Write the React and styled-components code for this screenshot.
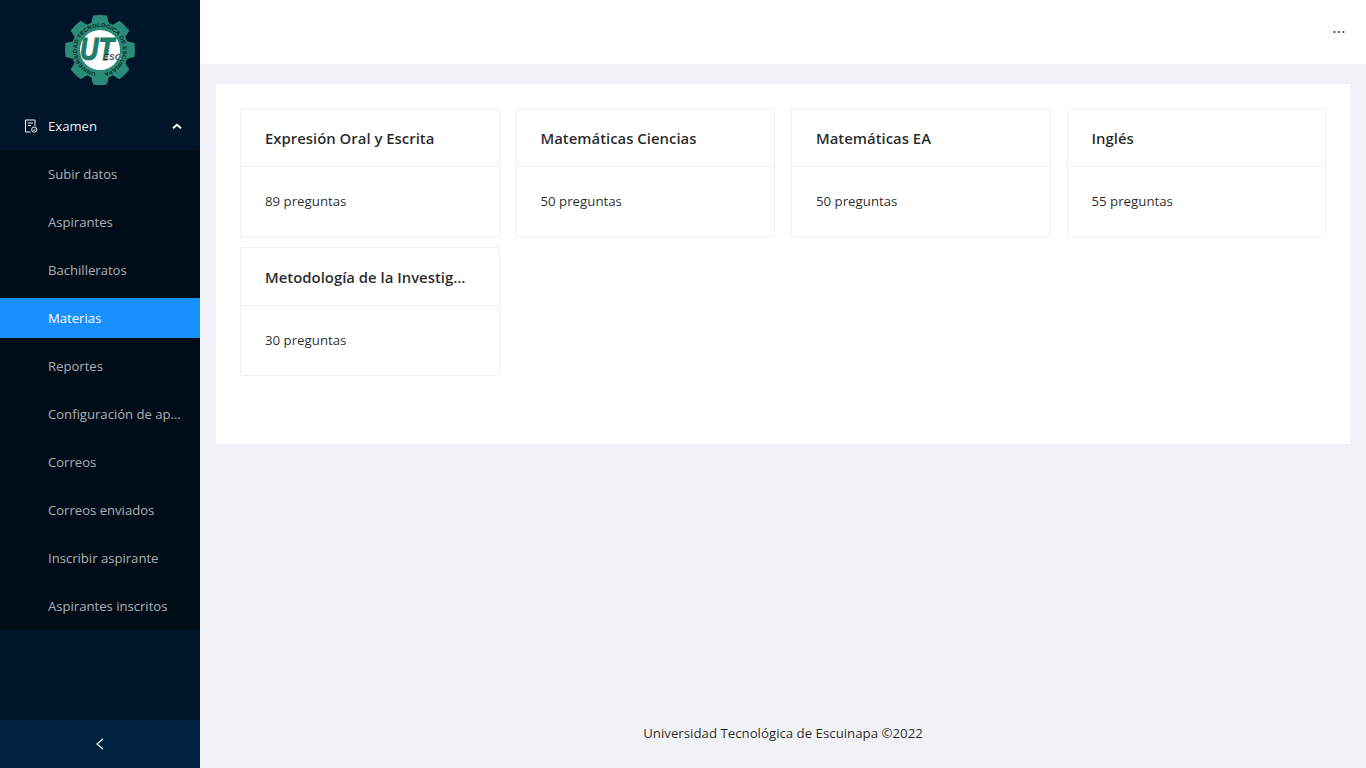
import React from "react";
import styled, { createGlobalStyle } from "styled-components";

const Global = createGlobalStyle`
  html, body { margin: 0; padding: 0; height: 100%; }
  body { font-family: "Open Sans", "Noto Sans", "Liberation Sans", sans-serif; font-size: 14px; color: rgba(0,0,0,.85); background: #f0f2f5; }
  * { box-sizing: border-box; }
`;
const Layout = styled.div`display: flex; width: 1366px; height: 768px; overflow: hidden;`;
const Sider = styled.aside`width: 200px; flex: none; background: #001529; display: flex; flex-direction: column;`;
const LogoBox = styled.div`height: 106px; display: flex; justify-content: center; padding-top: 14px;`;
const MenuTitle = styled.div`height: 40px; margin-bottom: 4px; padding: 0 18px 0 24px; display: flex; align-items: center; color: rgba(255,255,255,.95); font-size: 13.1px;`;
const TitleText = styled.span`flex: 1; margin-left: 10px;`;
const SubMenu = styled.div`background: #000c17; height: 480px; display: flex; flex-direction: column;`;
const SubItem = styled.div`
  height: 40px; flex: none; margin: 4px 0; padding-left: 48px; padding-right: 16px; line-height: 40px; font-size: 13.1px;
  color: ${p => (p.$active ? "#fff" : "rgba(255,255,255,.68)")};
  background: ${p => (p.$active ? "#1890ff" : "transparent")};
  white-space: nowrap; overflow: hidden; text-overflow: ellipsis;
`;
const Spacer = styled.div`flex: 1;`;
const Trigger = styled.div`height: 48px; background: #002140; color: #fff; display: flex; align-items: center; justify-content: center;`;
const Main = styled.div`flex: 1; display: flex; flex-direction: column; min-width: 0;`;
const Header = styled.header`height: 64px; background: #fff; display: flex; align-items: center; justify-content: flex-end; padding-right: 21px; flex: none;`;
const Content = styled.main`margin: 20px 16px 0; padding: 24px; height: 360px; background: #fff; flex: none;`;
const Grid = styled.div`display: grid; grid-template-columns: repeat(4, 1fr); column-gap: 16px; row-gap: 10px;`;
const Card = styled.div`border: 1px solid #f0f0f0; border-radius: 2px; background: #fff; height: 129px; min-width: 0;`;
const CardHead = styled.div`height: 58px; padding: 0 26px 0 24px; border-bottom: 1px solid #f0f0f0; display: flex; align-items: center; font-size: 14.9px; font-weight: 600; color: rgba(0,0,0,.85);`;
const CardTitle = styled.span`white-space: nowrap; overflow: hidden; text-overflow: ellipsis;`;
const CardBody = styled.div`padding: 23px 24px; line-height: 22px; font-size: 13.25px;`;
const Footer = styled.footer`flex: 1; display: flex; align-items: flex-end; justify-content: center; padding-bottom: 24px; line-height: 22px; font-size: 13.25px;`;

const Logo = () => {
  const teeth = Array.from({ length: 8 }, (_, i) => i * 45);
  return (
    <svg width="72" height="72" viewBox="0 0 72 72">
      {teeth.map(a => (
        <path key={a} d="M27 10 L29 1.5 Q36 .5 43 1.5 L45 10 Z" fill="#2a8c78" transform={`rotate(${a} 36 36)`} />
      ))}
      <circle cx="36" cy="36" r="28.5" fill="#2a8c78" />
      <circle cx="36" cy="36" r="20" fill="#fff" />
      <defs>
        <path id="ring" d="M 33 58.8 A 23 23 0 1 1 39 58.8" />
      </defs>
      <text fontFamily="Liberation Sans, sans-serif" fontSize="5.4" fontWeight="700" fill="#0b2622">
        <textPath href="#ring" startOffset="1" textLength="136" lengthAdjust="spacingAndGlyphs">UNIVERSIDAD TECNOLOGICA DE ESCUINAPA</textPath>
      </text>
      <text x="16" y="46" textLength="34" lengthAdjust="spacingAndGlyphs" fontFamily="Liberation Sans, sans-serif" fontSize="31" fontStyle="italic" fontWeight="700" fill="#1e7d6a" stroke="#1e7d6a" strokeWidth="1.1">UT</text>
      <text x="39" y="46" textLength="18" lengthAdjust="spacingAndGlyphs" fontFamily="Liberation Sans, sans-serif" fontSize="8.5" fontStyle="italic" fontWeight="700" fill="#10221f" stroke="#fff" strokeWidth=".2">ESC</text>
    </svg>
  );
};

const ExamIcon = () => (
  <svg width="14" height="14" viewBox="0 0 14 14" fill="none" stroke="currentColor" strokeWidth="1">
    <path d="M6.5 13H1.5V1h9.5v6" />
    <path d="M4 4h5M4 6.5h3" />
    <circle cx="10.2" cy="10.6" r="2.6" />
    <path d="M9 10.6l1 1 1.4-1.8" />
  </svg>
);
const Up = () => (
  <svg width="10" height="10" viewBox="0 0 10 10" fill="none" stroke="#fff" strokeWidth="2">
    <path d="M1 7.2l4-3.4 4 3.4" />
  </svg>
);
const Left = () => (
  <svg width="10" height="12" viewBox="0 0 10 12" fill="none" stroke="#fff" strokeWidth="1.2">
    <path d="M8 .8L2 6l6 5.2" />
  </svg>
);
const Dots = () => (
  <svg width="12" height="4" viewBox="0 0 12 4" fill="#333">
    <circle cx="1.5" cy="2" r="1" />
    <circle cx="6" cy="2" r="1" />
    <circle cx="10.5" cy="2" r="1" />
  </svg>
);

const items = ["Subir datos","Aspirantes","Bachilleratos","Materias","Reportes","Configuración de aplicación","Correos","Correos enviados","Inscribir aspirante","Aspirantes inscritos"];
const cards = [["Expresión Oral y Escrita",89],["Matemáticas Ciencias",50],["Matemáticas EA",50],["Inglés",55],["Metodología de la Investigación",30]];

export default function App() {
  return (
    <Layout>
      <Global />
      <Sider>
        <LogoBox><Logo /></LogoBox>
        <MenuTitle><ExamIcon /><TitleText>Examen</TitleText><Up /></MenuTitle>
        <SubMenu>
          {items.map(t => <SubItem key={t} $active={t === "Materias"}>{t}</SubItem>)}
        </SubMenu>
        <Spacer />
        <Trigger><Left /></Trigger>
      </Sider>
      <Main>
        <Header><Dots /></Header>
        <Content>
          <Grid>
            {cards.map(([t, n]) => (
              <Card key={t}>
                <CardHead><CardTitle>{t}</CardTitle></CardHead>
                <CardBody>{n} preguntas</CardBody>
              </Card>
            ))}
          </Grid>
        </Content>
        <Footer>Universidad Tecnológica de Escuinapa ©2022</Footer>
      </Main>
    </Layout>
  );
}
